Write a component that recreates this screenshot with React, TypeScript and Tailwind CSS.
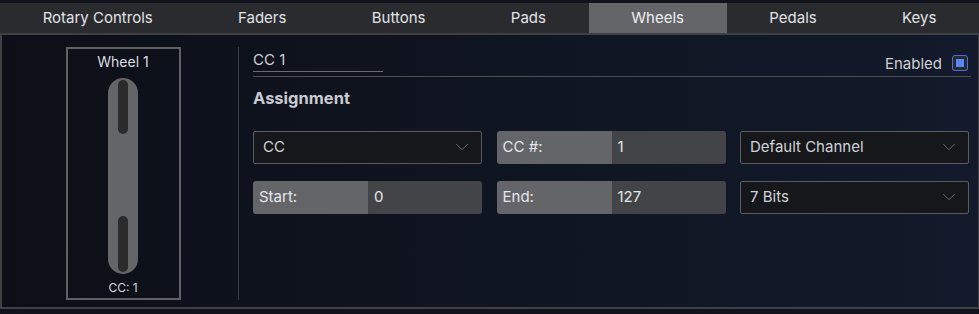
import { ChevronDown } from "lucide-react";

const tabs = ["Rotary Controls", "Faders", "Buttons", "Pads", "Wheels", "Pedals", "Keys"];

export default function App() {
  return (
    <div className="w-[979px] h-[314px] bg-[#10131b] pt-[3px] font-['Inter',sans-serif] text-[#d6d7db] overflow-hidden">
      {/* Tabs */}
      <div className="flex h-[30px] bg-[#2a2b2e]">
        {tabs.map((t) => (
          <div
            key={t}
            className={`flex-auto flex items-center justify-center text-[15px] ${
              t === "Wheels" ? "bg-[#646569] text-[#eeeef0]" : "text-[#e2e3e6]"
            }`}
          >
            {t}
          </div>
        ))}
      </div>

      {/* Panel */}
      <div className="h-[276px] border-2 border-r border-[#3f4043] bg-gradient-to-r from-[#0c0f17] to-[#121a2b] flex pt-[12px] pb-[5px]">
        {/* Wheel */}
        <div className="w-[236px] flex justify-center pl-[6px]">
          <div className="w-[115px] h-[253px] border-2 border-[#5f6064] flex flex-col items-center">
            <div className="text-[14px] leading-none mt-[6px] text-[#dcdde0]">Wheel 1</div>
            <div className="mt-[9px] w-[30px] h-[196px] rounded-full bg-[#646569] flex flex-col items-center justify-between p-[2px]">
              <div className="w-[10px] h-[54px] rounded-full bg-[#2b2b2d]" />
              <div className="w-[10px] h-[56px] rounded-full bg-[#2b2b2d]" />
            </div>
            <div className="text-[12px] leading-none mt-[8px] text-[#d6d7db]">CC: 1</div>
          </div>
        </div>

        {/* Divider */}
        <div className="w-px h-[253px] bg-[#3a3d44]" />

        {/* Details */}
        <div className="flex-1 pl-[14px] pr-[7px] flex flex-col">
          <div className="flex items-end justify-between border-b border-[#4d4e52] pb-[4px]">
            <div className="w-[130px] border-b border-[#6b6b6e] text-[15px] leading-none pb-[4px] pt-[5px] text-[#cfd0d4]">
              CC 1
            </div>
            <div className="flex items-center gap-[10px] mb-[1px] mr-[3px]">
              <span className="text-[15px] leading-none text-[#cfd0d4]">Enabled</span>
              <div className="w-[16px] h-[16px] rounded-[3px] border border-[#4d6fdc] bg-[#26282e] flex items-center justify-center">
                <div className="w-[8px] h-[8px] bg-[#5b86f5]" />
              </div>
            </div>
          </div>

          <div className="text-[16.5px] font-bold leading-none mt-[13px] text-[#c9cbd1]">Assignment</div>

          <div className="grid grid-cols-3 gap-x-[14.5px] gap-y-[17px] mt-[24px] w-[716px]">
            <Select label="CC" />
            <Field label="CC #:" value="1" />
            <Select label="Default Channel" />
            <Field label="Start:" value="0" />
            <Field label="End:" value="127" />
            <Select label="7 Bits" />
          </div>
        </div>
      </div>
    </div>
  );
}

function Select({ label }: { label: string }) {
  return (
    <div className="h-[33px] border border-[#5a5b60] rounded-[2px] bg-[#16171b] flex items-center justify-between pl-[9px] pr-[8px]">
      <span className="text-[15px] text-[#d2d3d7]">{label}</span>
      <ChevronDown size={22} strokeWidth={1} className="text-[#6e6f73]" />
    </div>
  );
}

function Field({ label, value }: { label: string; value: string }) {
  return (
    <div className="h-[33px] rounded-[3px] overflow-hidden flex">
      <div className="w-[115px] bg-[#646569] flex items-center pl-[6px] text-[15px] text-[#e4e5e8]">{label}</div>
      <div className="flex-1 bg-[#434447] flex items-center pl-[6px] text-[15px] text-[#e4e5e8]">{value}</div>
    </div>
  );
}
